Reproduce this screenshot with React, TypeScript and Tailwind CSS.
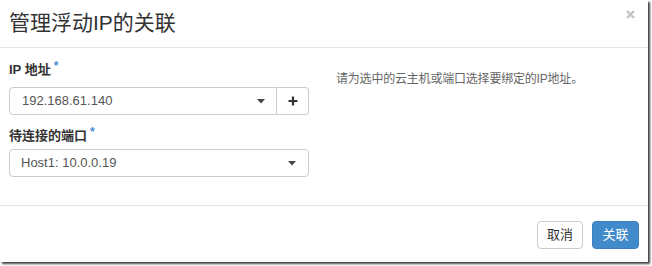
const font = { fontFamily: '"Liberation Sans", "Noto Sans CJK SC", sans-serif' };

function Caret() {
  return (
    <svg width="8" height="5" viewBox="0 0 8 5" className="shrink-0">
      <path d="M0 0 L8 0 L4 4.5 Z" fill="#444" />
    </svg>
  );
}

function Label({ text }: { text: string }) {
  return (
    <div className="h-[18px] leading-[18px] text-[13px] font-bold text-[#333] flex items-start">
      <span>{text}</span>
      <span className="ml-[3px] text-[#4a90d0] text-[12px] leading-[10px]">*</span>
    </div>
  );
}

export default function App() {
  return (
    <div className="w-[652px] h-[266px] bg-white" style={font}>
      <div className="w-[648px] h-[262px] bg-white flex flex-col shadow-[2px_2px_2px_rgba(0,0,0,0.75)]">
        <div className="h-[48px] shrink-0 border-b border-[#e5e5e5] px-[9px] flex items-center relative">
          <h1 className="text-[21px] leading-none text-[#333] font-normal -mt-[2px]">管理浮动IP的关联</h1>
          <svg width="9" height="9" viewBox="0 0 9 9" className="absolute left-[626px] top-[10px]">
            <path d="M1 1 L8 8 M8 1 L1 8" stroke="#c4c4c4" strokeWidth="2.4" />
          </svg>
        </div>

        <div className="h-[157px] shrink-0 px-[9px] pt-[13px] flex">
          <div className="w-[300px] flex flex-col">
            <Label text="IP 地址" />
            <div className="mt-[8px] flex h-[28px]">
              <div className="w-[268px] h-[28px] border border-[#ccc] rounded-l-[4px] flex items-center justify-between pl-[12px] pr-[11px] text-[13px] text-[#555]">
                <span>192.168.61.140</span>
                <Caret />
              </div>
              <div className="w-[32px] h-[28px] border border-l-0 border-[#ccc] rounded-r-[4px] flex items-center justify-center">
                <svg width="10" height="10" viewBox="0 0 10 10">
                  <path d="M5 0.5 V9.5 M0.5 5 H9.5" stroke="#333" strokeWidth="2.2" />
                </svg>
              </div>
            </div>
            <div className="mt-[12px]">
              <Label text="待连接的端口" />
            </div>
            <div className="mt-[4px] w-[300px] h-[28px] border border-[#ccc] rounded-[4px] flex items-center justify-between pl-[11px] pr-[12px] text-[13px] text-[#555]">
              <span>Host1: 10.0.0.19</span>
              <Caret />
            </div>
          </div>
          <div className="ml-[27px] mt-[10px] text-[12px] leading-[17px] text-[#666] tracking-[-0.2px]">
            请为选中的云主机或端口选择要绑定的IP地址。
          </div>
        </div>

        <div className="flex-1 border-t border-[#e5e5e5] flex justify-end items-start pt-[15px] pr-[9px] gap-[9px]">
          <button className="w-[46px] h-[28px] border border-[#ccc] rounded-[4px] bg-white text-[13px] text-[#333]">取消</button>
          <button className="w-[47px] h-[28px] border border-[#3b7fc0] rounded-[4px] bg-[#428bca] text-[13px] text-white">关联</button>
        </div>
      </div>
    </div>
  );
}
